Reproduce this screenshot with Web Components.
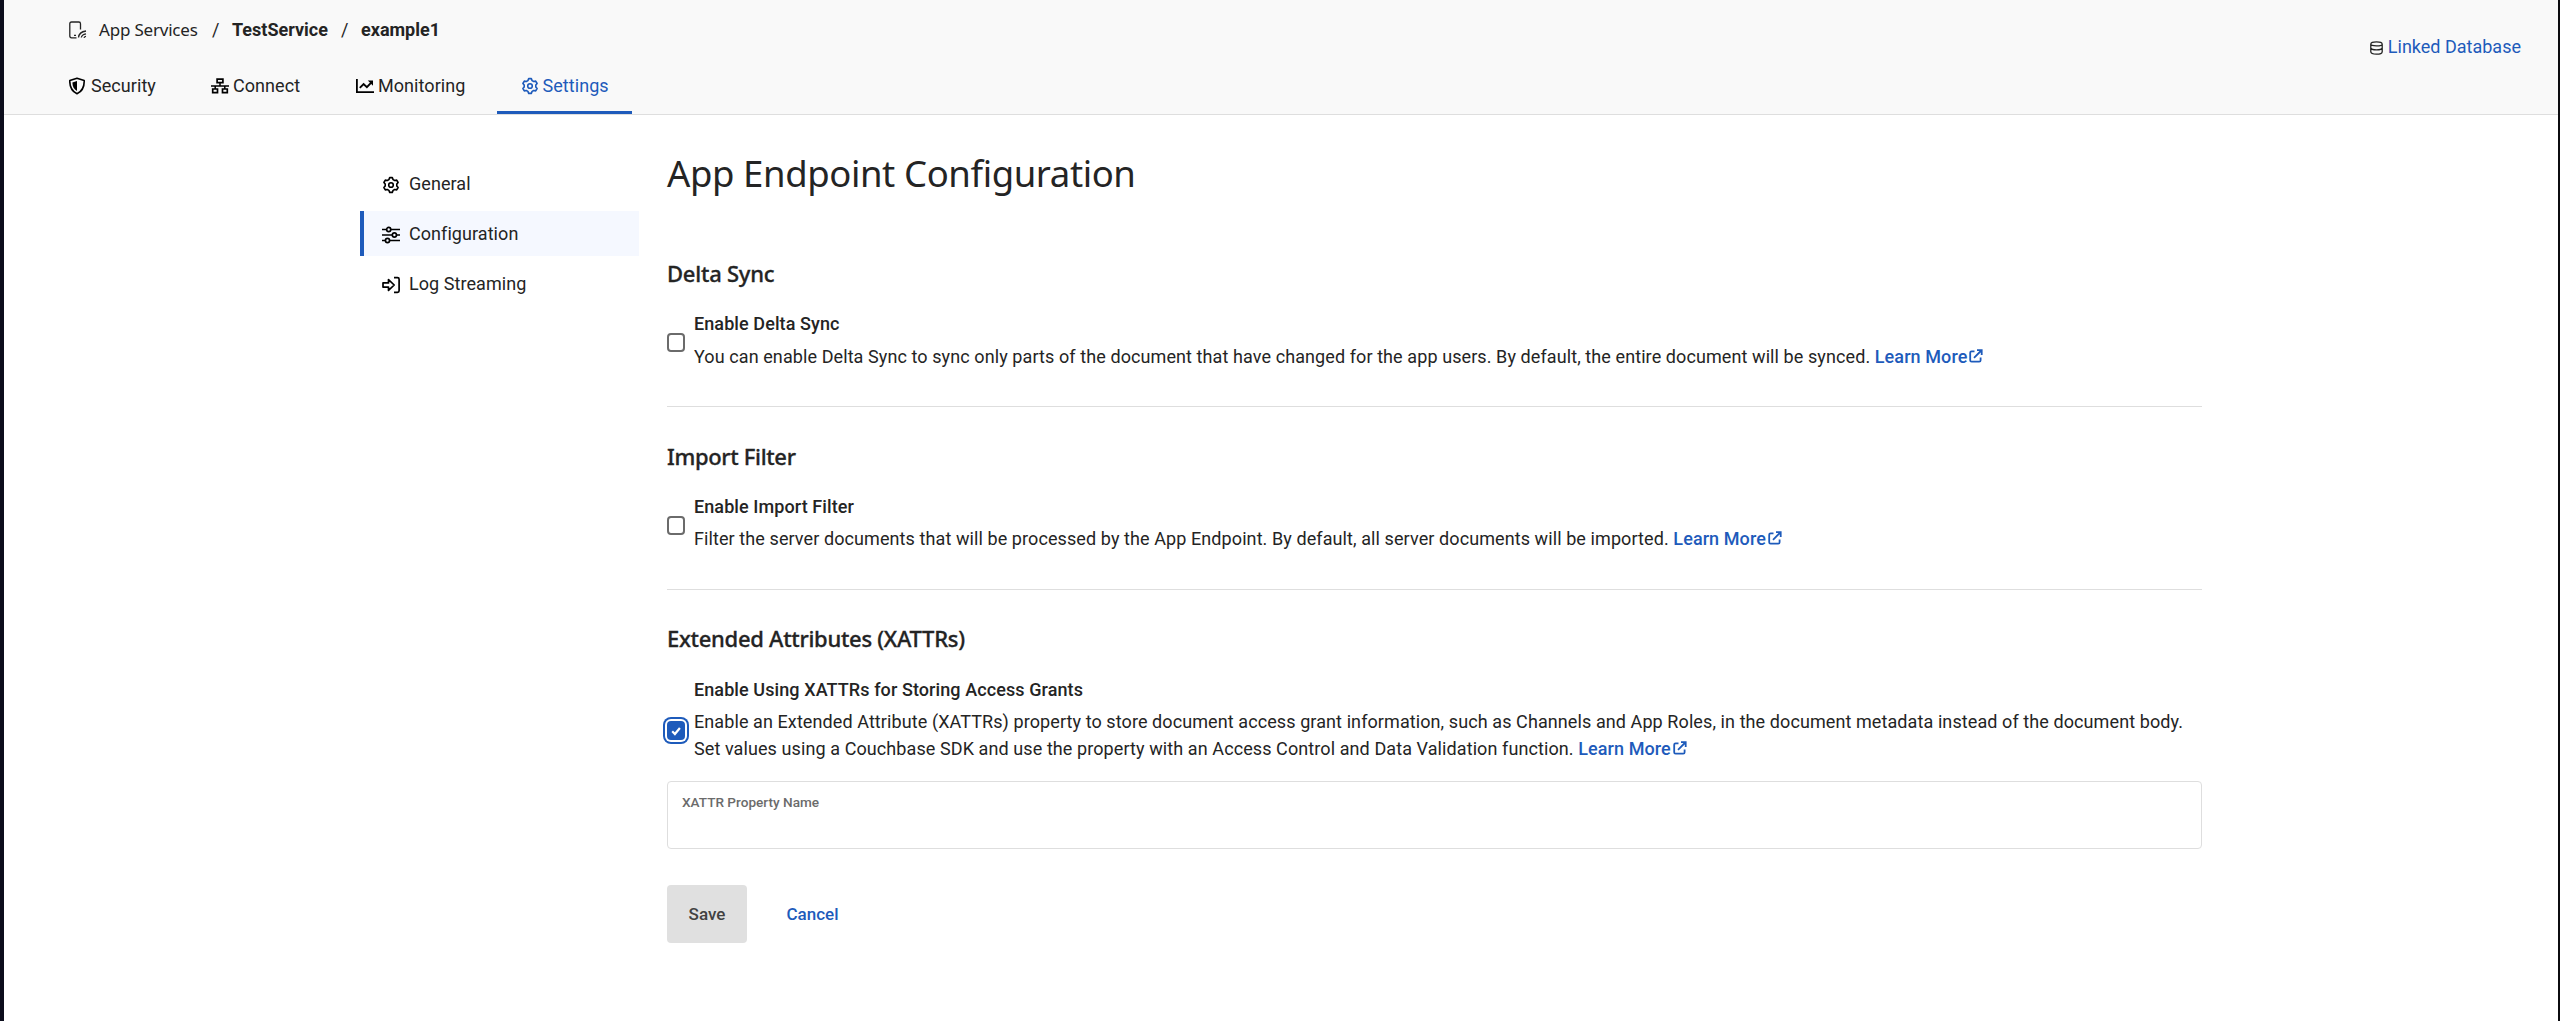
<!DOCTYPE html>
<html lang="en">
<head>
<meta charset="utf-8">
<title>App Endpoint Configuration</title>
<style>
html,body{margin:0;padding:0;height:100%;background:#fff}
body{font:400 18px/27px Roboto,"Liberation Sans",sans-serif;color:#242424;overflow:hidden}
</style>
</head>
<body>
<app-shell>
  <app-header slot="header">
    <crumb-trail slot="crumbs"></crumb-trail>
    <nav-tab slot="tabs" icon="shield" style="width:142px">Security</nav-tab>
    <nav-tab slot="tabs" icon="network" style="width:145px">Connect</nav-tab>
    <nav-tab slot="tabs" icon="chart" style="width:165px">Monitoring</nav-tab>
    <nav-tab slot="tabs" icon="gear" active style="width:135px">Settings</nav-tab>
    <linked-db slot="aside">Linked Database</linked-db>
  </app-header>
  <side-nav slot="nav">
    <side-item icon="gear">General</side-item>
    <side-item icon="sliders" active>Configuration</side-item>
    <side-item icon="enter">Log Streaming</side-item>
  </side-nav>
  <page-title>App Endpoint Configuration</page-title>
  <config-section heading="Delta Sync" style="--hs:-.23px">
    <check-option label="Enable Delta Sync">You can enable Delta Sync to sync only parts of the document that have changed for the app users. By default, the entire document will be synced. <learn-more></learn-more></check-option>
  </config-section>
  <config-section heading="Import Filter" style="--hs:-.34px;--gap:5px;--bottom:37px">
    <check-option label="Enable Import Filter">Filter the server documents that will be processed by the App Endpoint. By default, all server documents will be imported. <learn-more></learn-more></check-option>
  </config-section>
  <config-section heading="Extended Attributes (XATTRs)" last style="--hs:-.29px;--gap:5px;--top:33px;--under:23px;--bottom:19px">
    <check-option label="Enable Using XATTRs for Storing Access Grants" checked style="--drop:23px">Enable an Extended Attribute (XATTRs) property to store document access grant information, such as Channels and App Roles, in the document metadata instead of the document body.<br>Set values using a Couchbase SDK and use the property with an Access Control and Data Validation function. <learn-more></learn-more></check-option>
  </config-section>
  <text-field label="XATTR Property Name"></text-field>
  <form-actions></form-actions>
</app-shell>
<script>
const ICONS = {
  gear: '<g transform="translate(9 9)" fill="none" stroke="currentColor" stroke-width="1.6" stroke-linejoin="round"><path d="M-1.3-7.400H1.300L2.100-5.400 3.700-4.500 5.700-4.900 7.100-2.500 5.800-.9V.9L7.100 2.500 5.700 4.900 3.700 4.500 2.100 5.400 1.300 7.400H-1.300L-2.100 5.400-3.700 4.500-5.700 4.900-7.100 2.500-5.800.9V-.9L-7.100-2.500-5.700-4.900-3.700-4.500-2.100-5.400Z"/><circle r="2.300"/></g>',
  shield: '<path d="M8 1.200 15.200 3.600C15.400 9.500 13.200 14.300 8 16.800 2.800 14.300.6 9.500.8 3.600Z" fill="none" stroke="currentColor" stroke-width="1.600" stroke-linejoin="round"/><path d="M8 4V14C5 12.200 3.400 9.500 3.400 5.400Z" fill="currentColor"/>',
  network: '<path d="M0 8.900H18M9 5.500V9M4.200 9V12M13.800 9V12" fill="none" stroke="currentColor" stroke-width="1.500"/><path d="M6.100 2.100H11.900V5.700H6.100ZM1.700 12H6.500V15.600H1.700ZM11.500 12H16.300V15.600H11.500Z" fill="none" stroke="currentColor" stroke-width="1.700"/>',
  chart: '<path d="M.9 2V15.200H18" fill="none" stroke="currentColor" stroke-width="1.800"/><path d="M3.800 10.800 7.600 7 10.900 10.200 15.200 5.600" fill="none" stroke="currentColor" stroke-width="1.900"/><path d="M11.800 3.600H17V8.800Z" fill="currentColor"/>',
  sliders: '<g fill="none" stroke="currentColor" stroke-width="1.700"><path d="M0 3.500H4.500M9 3.500H18M0 9H10M14.700 9H18M0 14.500H3.200M7.700 14.500H18"/><circle cx="6.700" cy="3.500" r="2.050"/><circle cx="12.400" cy="9" r="2.050"/><circle cx="5.500" cy="14.500" r="2.050"/></g>',
  enter: '<g fill="none" stroke="currentColor" stroke-width="1.700" stroke-linejoin="round"><path d="M1 6.900H6.500V3.600L12.200 9 6.500 14.400V11.100H1Z"/><path d="M12 1.700H15.500Q17.100 1.700 17.100 3.300V14.700Q17.100 16.300 15.500 16.300H12"/></g>'
};
const svg = n => `<svg width="18" height="18" viewBox="0 0 18 18" aria-hidden="true">${ICONS[n]}</svg>`;
const define = (name, view) => customElements.define(name, class extends HTMLElement {
  constructor() { super(); this.attachShadow({ mode: 'open' }); }
  connectedCallback() { this.shadowRoot.innerHTML = '<style>*{box-sizing:border-box}svg{display:block;flex:none}</style>' + view(this); }
});

define('app-shell', () => `<style>
:host{display:flex;flex-direction:column;box-sizing:border-box;width:100%;height:100vh;border-left:4px solid #0c0d1c;border-right:2px solid #0b0b0f;background:#fff}
.body{display:flex;align-items:flex-start;padding-left:356px;gap:28px}
nav{width:279px;padding-top:46px}
main{width:1535px;padding-top:28px}
</style><slot name="header"></slot><div class="body"><nav><slot name="nav"></slot></nav><main><slot></slot></main></div>`);

define('app-header', () => `<style>
:host{display:flex;justify-content:space-between;box-sizing:border-box;height:115px;flex:none;background:#f9f9f9;border-bottom:1px solid #dedede;padding:0 37px 0 41px}
.left{display:flex;flex-direction:column;justify-content:space-between}
.tabs{display:flex}
</style><div class="left"><slot name="crumbs"></slot><div class="tabs"><slot name="tabs"></slot></div></div><slot name="aside"></slot>`);

define('crumb-trail', () => `<style>
:host{display:flex;align-items:center;height:59px;padding-left:24px;white-space:nowrap}
svg{margin-right:12px}
.root{font-family:"Noto Sans",sans-serif;font-size:17px;letter-spacing:-.2px;width:113px}
.sep{width:20px}
b{font-weight:700}.a{width:109px}
</style><svg width="18" height="18" viewBox="0 0 18 18" fill="none" stroke="currentColor" stroke-width="1.300"><path d="M7.500 16.800H2.500Q.8 16.800.8 15.100V2.700Q.8 1 2.500 1H9.800Q11.500 1 11.500 2.700V8.500M5 14.300H7"/><path d="M9.500 16.500Q10 11 17 10M12.300 16.500Q12.800 13.500 17 12.800M15 16.800Q15.300 15.600 17 15.300"/></svg><span class="root">App Services</span><span class="sep">/</span><b class="a">TestService</b><span class="sep">/</span><b>example1</b>`);

define('nav-tab', el => `<style>
:host{display:flex;height:54px}
div{flex:1;display:flex;align-items:flex-start;gap:4px;padding:12px 0 0 24px;height:54px;border-bottom:3px solid transparent;white-space:nowrap}
span{letter-spacing:.06px}
svg{margin-top:5px;color:#000}
:host([active]) div{color:#1e5bbb;border-color:#1e5bbb}
:host([active]) svg{color:inherit}
:host([active]) div{padding-left:23.500px}
</style><div>${svg(el.getAttribute('icon'))}<span><slot></slot></span></div>`);

define('linked-db', () => `<style>
:host{display:flex;align-items:center;gap:5px;height:93px;color:#1e5bbb;white-space:nowrap}
svg{color:#222;margin-top:2px}
</style><svg width="13" height="14" viewBox="0 0 13 14" fill="none" stroke="currentColor" stroke-width="1.300"><path d="M.8 3.200Q.8.8 6.500.8T12.200 3.200Q12.200 4.900 6.500 4.900T.8 3.200V10.800Q.8 13.200 6.500 13.200T12.200 10.800V3.200M.8 7Q1.200 8.900 6.500 8.900T12.200 7"/></svg><span><slot></slot></span>`);

define('side-nav', () => `<style>:host{display:flex;flex-direction:column;gap:5px}</style><slot></slot>`);

define('side-item', el => `<style>
:host{display:flex;align-items:center;gap:9px;height:45px;box-sizing:border-box;border-left:4px solid transparent;padding-left:18px;letter-spacing:.06px}
svg{color:#000;margin-top:3px}
:host([active]){border-color:#1e5bbb;background:#f5f8ff}
</style>${svg(el.getAttribute('icon'))}<span><slot></slot></span>`);

define('page-title', () => `<style>
:host{display:block;height:81px;white-space:nowrap}
h1{margin:0;font:400 36.500px/60px "Noto Sans",sans-serif;letter-spacing:-.4px}
</style><h1><slot></slot></h1>`);

define('config-section', el => `<style>
:host{display:block;box-sizing:border-box;padding:var(--top,34px) 0 var(--bottom,36px);border-bottom:1px solid #dedede}
:host([last]){border:0}
h2{margin:0 0 var(--under,22px);font:500 22px/30px "Noto Sans",sans-serif;letter-spacing:var(--hs,0);-webkit-text-stroke:.3px currentColor}
</style><h2>${el.getAttribute('heading')}</h2><slot></slot>`);

define('check-option', el => `<style>
:host{display:flex;align-items:center;gap:9px}
.box{flex:none;width:18px;height:19px;border:2px solid #6b6b6b;border-radius:4px;margin-top:var(--drop,5px);display:grid;place-items:center}
:host([checked]) .box{border:0;background:#1e5bbb;box-shadow:0 0 0 2px #fff,0 0 0 4px #1e5bbb}
.label{font-weight:500;margin-bottom:var(--gap,6px)}
.text{white-space:nowrap;letter-spacing:.09px}
</style><span class="box">${el.hasAttribute('checked') ? '<svg width="12" height="12" viewBox="0 0 12 12"><path d="M2.200 6.300 4.900 9 9.900 3" fill="none" stroke="#fff" stroke-width="2.200"/></svg>' : ''}</span><div class="text"><div class="label">${el.getAttribute('label')}</div><div><slot></slot></div></div>`);

define('learn-more', () => `<style>
:host{display:inline-flex;align-items:center;gap:2px;color:#1e5bbb;font-weight:500;height:27px;vertical-align:top;letter-spacing:.088px}
svg{margin-top:-1px}
</style><span>Learn More</span><svg width="14" height="14" viewBox="0 0 14 14" fill="none" stroke="currentColor" stroke-width="1.800"><path d="M5.500 2.300H2.600Q1.200 2.300 1.200 3.700V11.200Q1.200 12.600 2.600 12.600H10.200Q11.600 12.600 11.600 11.200V8.500M5 8.800 12.300 1.500M8 1.200H12.700V5.900"/></svg>`);

define('text-field', el => `<style>
:host{display:block;box-sizing:border-box;height:68px;border:1px solid #dedede;border-radius:4px;padding:9px 14px;color:#6b6b6b;font-size:13.600px;font-weight:500;line-height:22px}
</style><label>${el.getAttribute('label')}</label>`);

define('form-actions', () => `<style>
:host{display:flex;padding-top:36px;gap:39.500px}
button{font:500 17px/27px Roboto,sans-serif;border:0;border-radius:4px;background:none;color:#1e5bbb;height:58px;padding:0}
.save{width:80px;background:#e0e0e0;color:#424242}
</style><button class="save">Save</button><button>Cancel</button>`);
</script>
</body>
</html>
